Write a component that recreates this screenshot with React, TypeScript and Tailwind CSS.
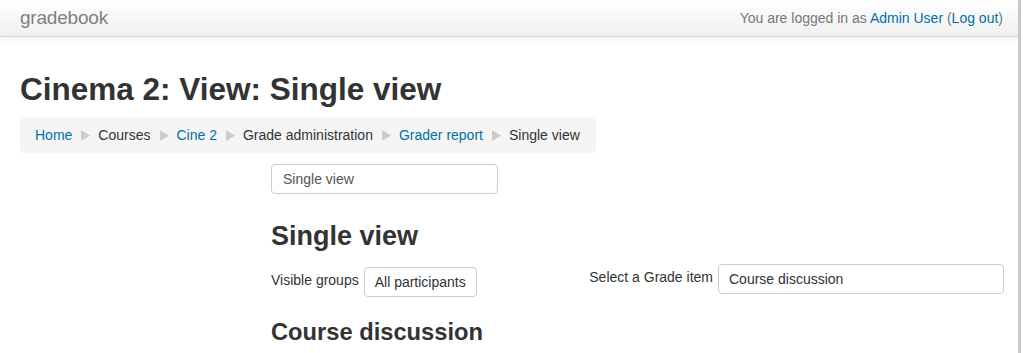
import React from 'react';

const crumbs = [
  { label: 'Home', link: true },
  { label: 'Courses', link: false },
  { label: 'Cine 2', link: true },
  { label: 'Grade administration', link: false },
  { label: 'Grader report', link: true },
  { label: 'Single view', link: false },
];

function Separator() {
  return (
    <svg width="9" height="11" viewBox="0 0 9 11" className="ml-[9px] mr-[8px] shrink-0">
      <path d="M0 0 L9 5.5 L0 11 Z" fill="#cccccc" />
    </svg>
  );
}

export default function App() {
  return (
    <div className="flex min-h-[353px] bg-white text-[#333] font-['Liberation_Sans',Arial,sans-serif]">
      <div className="flex-1">
        {/* navbar */}
        <div className="h-[37px] flex items-center justify-between px-[20px] pr-[15px] bg-gradient-to-b from-white to-[#f0f0f0] border-b border-[#d4d4d4] shadow-[0_1px_6px_rgba(0,0,0,0.08)]">
          <span className="text-[19px] text-[#808080] font-light tracking-[-0.2px]">gradebook</span>
          <span className="text-[14px] text-[#777]">
            You are logged in as <a className="text-[#0070a8]">Admin User</a> (
            <a className="text-[#0070a8]">Log out</a>)
          </span>
        </div>

        <div className="px-[20px]">
          <h1 className="mt-[32px] text-[31.5px] leading-[40px] font-bold text-[#333]">
            Cinema 2: View: Single view
          </h1>

          <div className="mt-[8px] inline-flex items-center h-[36px] px-[15px] pr-[16px] bg-[#f5f5f5] rounded-[4px] text-[14px]">
            {crumbs.map((c, i) => (
              <React.Fragment key={c.label}>
                {i > 0 && <Separator />}
                <span className={c.link ? 'text-[#0070a8]' : 'text-[#333]'}>{c.label}</span>
              </React.Fragment>
            ))}
          </div>

          <div className="flex">
            <div className="w-[251px] shrink-0" />
            <div className="flex-1 -mr-[6px]">
              <div className="mt-[11px] w-[227px] h-[30px] flex items-center px-[11px] border border-[#ccc] rounded-[4px] text-[14px] text-[#555]">
                Single view
              </div>

              <h2 className="mt-[25px] text-[27px] leading-[34px] font-bold text-[#333]">Single view</h2>

              <div className="mt-[11px] flex items-start justify-between">
                <div className="flex items-center mt-[3px]">
                  <span className="text-[14px] text-[#333] mr-[5px] -mt-[3px]">Visible groups</span>
                  <div className="h-[30px] px-[10px] flex items-center border border-[#ccc] rounded-[4px] text-[14px] text-[#333]">
                    All participants
                  </div>
                </div>
                <div className="flex items-center">
                  <span className="text-[14px] text-[#333] mr-[5px] -mt-[3px]">Select a Grade item</span>
                  <div className="w-[286px] h-[30px] px-[10px] flex items-center border border-[#ccc] rounded-[4px] text-[14px] text-[#333]">
                    Course discussion
                  </div>
                </div>
              </div>

              <h3 className="mt-[20px] text-[23.7px] leading-[30px] font-bold text-[#333]">Course discussion</h3>
            </div>
          </div>
        </div>
      </div>
      <div className="w-[3px] bg-[#c8c8c8]" />
      <div className="w-[2px] bg-white" />
    </div>
  );
}
